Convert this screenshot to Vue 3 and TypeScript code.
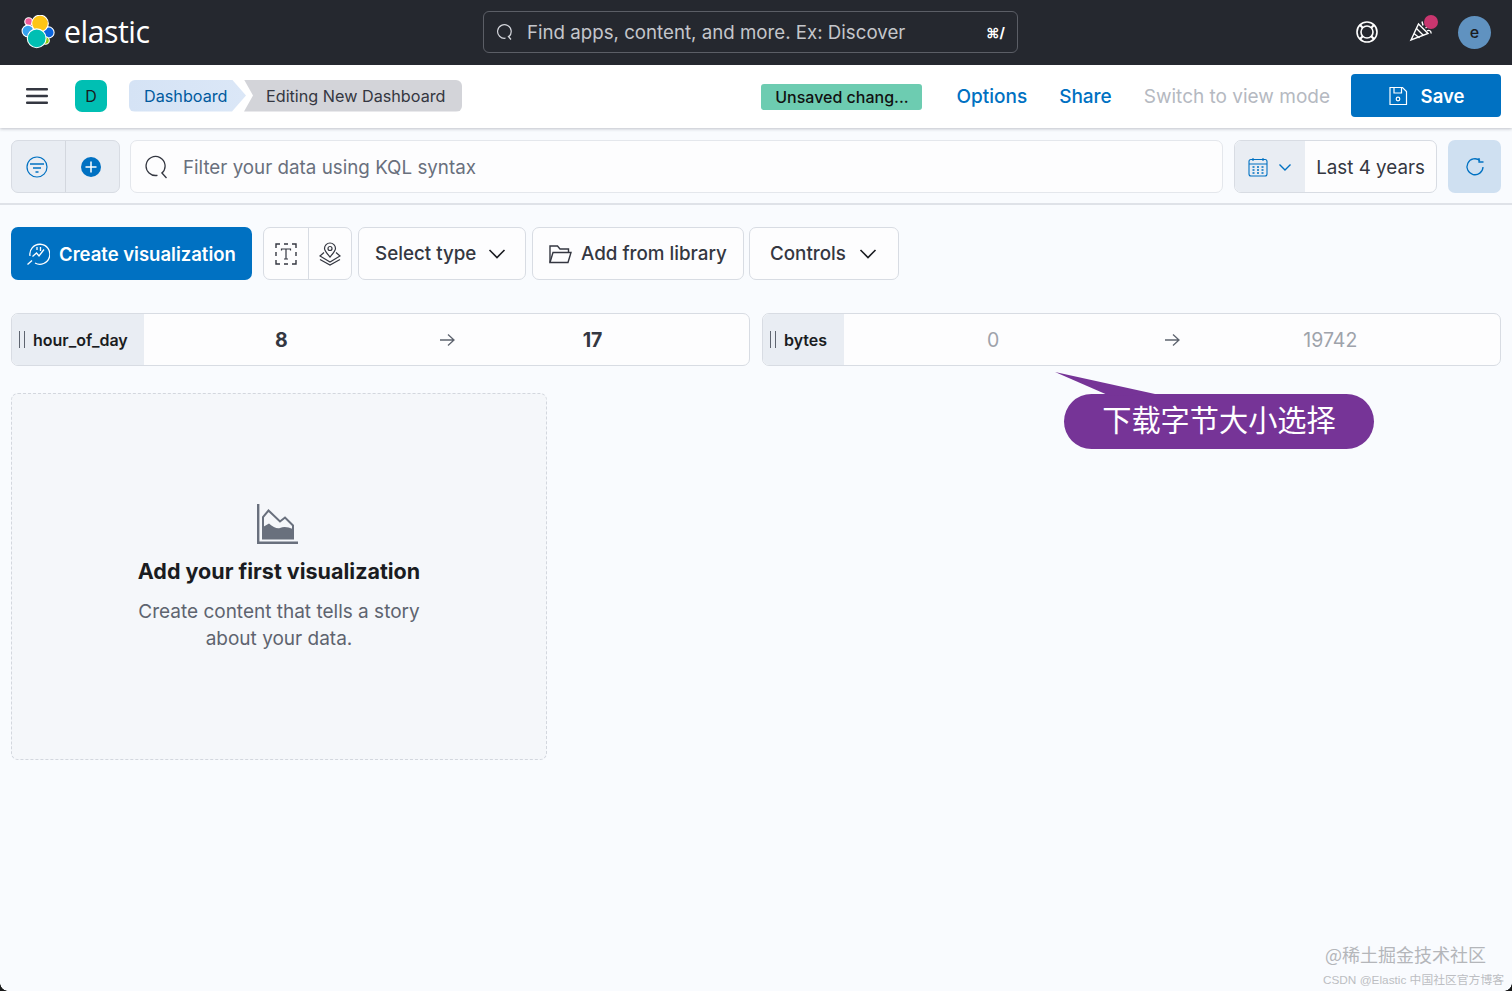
<script setup lang="ts">
</script>

<template>
  <div class="page">
    <header class="top">
      <div class="brand">
        <svg class="logo" viewBox="0 0 34 34" width="34" height="34">
          <g stroke="#fff" stroke-width="1.100">
            <circle cx="7.700" cy="6.700" r="3.900" fill="#ef5b9c" />
            <circle cx="27.500" cy="17.500" r="5.600" fill="#0b64dd" />
            <circle cx="24.500" cy="25.500" r="3.800" fill="#93c90e" />
            <circle cx="7" cy="16" r="5.900" fill="#36a2ef" />
            <circle cx="19" cy="8.500" r="8.300" fill="#fec514" />
            <circle cx="15.700" cy="23.300" r="9.400" fill="#00bfb3" />
          </g>
        </svg>
        <span class="wordmark">elastic</span>
      </div>
      <div class="global-search">
        <svg class="gs-icon" viewBox="0 0 18 18" width="18" height="18" fill="none" stroke="#d4d6dc" stroke-width="1.200">
          <path d="M14 13.500 A6.800 6.800 0 1 0 10.500 15.200" />
          <path d="M13 13 l3 3.500" />
        </svg>
        <span class="gs-text">Find apps, content, and more. Ex: Discover</span>
        <span class="gs-kbd">⌘/</span>
      </div>
      <div class="top-actions">
        <svg class="buoy" viewBox="0 0 24 24" width="24" height="24" fill="none" stroke="#fff" stroke-width="1.600">
          <circle cx="12" cy="12" r="10" />
          <circle cx="12" cy="12" r="6" />
          <path d="M5 5l3 3M19 5l-3 3M5 19l3-3M19 19l-3-3" stroke-width="2.200" />
        </svg>
        <div class="party">
          <svg viewBox="0 0 24 24" width="24" height="24" fill="none" stroke="#fff" stroke-width="1.400">
            <path d="M2 20 L9.500 4 L19 13.500 Z" />
            <path d="M5 13.500 L10.500 18M7.500 8.500 L14.500 15.500" />
            <path d="M13 1.500 L14 5.500M16.500 8 L19 6.500M18 11 C20 9.500 22.500 11 22 13.500" />
          </svg>
          <span class="dot"></span>
        </div>
        <div class="avatar">e</div>
      </div>
    </header>

    <nav class="subnav">
      <div class="nav-left">
        <svg class="menu" viewBox="0 0 22 16" width="22" height="16" fill="#343741">
          <rect y="0" width="22" height="2.500" rx="1" />
          <rect y="6.700" width="22" height="2.500" rx="1" />
          <rect y="13.400" width="22" height="2.500" rx="1" />
        </svg>
        <div class="space">D</div>
        <div class="crumbs">
          <span class="crumb first">Dashboard</span>
          <span class="crumb last">Editing New Dashboard</span>
        </div>
      </div>
      <div class="nav-right">
        <span class="unsaved">Unsaved chang...</span>
        <a class="link options">Options</a>
        <a class="link share">Share</a>
        <a class="link disabled">Switch to view mode</a>
        <button class="save">
          <svg viewBox="0 0 20 20" width="20" height="20" fill="none" stroke="#fff" stroke-width="1.200">
            <path d="M2 1.500 H14.500 L18.500 5.500 V18.500 H2 Z" />
            <path d="M6 1.500 V7 H13.500 V1.500" />
            <circle cx="10" cy="13" r="1.800" />
          </svg>
          <span>Save</span>
        </button>
      </div>
    </nav>

    <section class="querybar">
      <div class="filter-group">
        <div class="fg-cell">
          <svg viewBox="0 0 22 22" width="22" height="22" fill="none" stroke="#0071c2" stroke-width="1.200">
            <circle cx="11" cy="11" r="10" />
            <path d="M4 8h14M7 12h8M9.500 16h3" stroke-width="1.400" />
          </svg>
        </div>
        <div class="fg-cell end">
          <svg viewBox="0 0 22 22" width="22" height="22">
            <circle cx="11" cy="11" r="10" fill="#0071c2" />
            <path d="M11 5.500v11M5.500 11h11" stroke="#fff" stroke-width="1.500" />
          </svg>
        </div>
      </div>
      <div class="kql">
        <svg viewBox="0 0 24 24" width="24" height="24" fill="none" stroke="#343741" stroke-width="1.300">
          <path d="M17 18 A9.500 9.500 0 1 0 12.500 20.300" />
          <path d="M16.500 17.500 l5 5.500" />
        </svg>
        <span class="kql-text">Filter your data using KQL syntax</span>
      </div>
      <div class="time">
        <div class="cal">
          <svg viewBox="0 0 20 20" width="20" height="20" fill="none" stroke="#0071c2" stroke-width="1.100">
            <rect x="1" y="2.500" width="18" height="16.500" rx="2" />
            <path d="M1 7h18M5 1v3M15 1v3" />
            <path d="M4.500 10h2M9 10h2M13.500 10h2M4.500 13h2M9 13h2M13.500 13h2M4.500 16h2M9 16h2M13.500 16h2" stroke-width="1.300" />
          </svg>
          <svg viewBox="0 0 14 14" width="14" height="14" fill="none" stroke="#0071c2" stroke-width="1.400">
            <path d="M1.500 4.500 L7 10 L12.500 4.500" />
          </svg>
        </div>
        <span class="time-label">Last 4 years</span>
      </div>
      <button class="refresh">
        <svg viewBox="0 0 20 20" width="20" height="20" fill="none" stroke="#0071c2" stroke-width="1.300">
          <path d="M15 3.500 A8 8 0 1 0 18 10" />
          <path d="M14 1 V5 H18.500" />
        </svg>
      </button>
    </section>

    <section class="toolbar">
      <button class="create">
        <svg viewBox="0 0 24 24" width="24" height="24" fill="none" stroke="#fff" stroke-width="1.300">
          <path d="M1.500 22.500 L6 18.500" />
          <path d="M4 14 A10 10 0 1 1 9 21" />
          <path d="M6.500 14.500 L10.500 11 L13 14 L18 7.500M11 5v3M14.500 5v4" />
        </svg>
        <span>Create visualization</span>
      </button>
      <div class="icon-group">
        <div class="ig-cell">
          <svg viewBox="0 0 24 24" width="24" height="24" fill="none" stroke="#343741" stroke-width="1.400">
            <path d="M2 6V2h4M10 2h4M18 2h4v4M22 10v4M22 18v4h-4M14 22h-4M6 22H2v-4M2 14v-4" />
            <path d="M7.500 8.500V7h9v1.500M12 7v10M10 17h4" stroke-width="1.200" />
          </svg>
        </div>
        <div class="ig-cell end">
          <svg viewBox="0 0 24 24" width="24" height="24" fill="none" stroke="#343741" stroke-width="1.200">
            <path d="M12 15 C8 10.500 6.500 8.500 6.500 6.500 A5.500 5.500 0 0 1 17.500 6.500 C17.500 8.500 16 10.500 12 15 Z" />
            <circle cx="12" cy="6.500" r="2" />
            <path d="M6 10.500 L2 14 L12 20 L22 14 L18 10.500" />
            <path d="M2 17.500 L12 23 L22 17.500" />
          </svg>
        </div>
      </div>
      <button class="plain select-type">
        <span>Select type</span>
        <svg viewBox="0 0 18 18" width="18" height="18" fill="none" stroke="#1a1c21" stroke-width="1.600"><path d="M1.500 5 L9 12.500 L16.500 5" /></svg>
      </button>
      <button class="plain library">
        <svg viewBox="0 0 24 24" width="24" height="24" fill="none" stroke="#343741" stroke-width="1.400">
          <path d="M2 20.500 V4 H9.500 L12 7 H20.500 V10.500" />
          <path d="M2 20.500 L5 10.500 H23 L20 20.500 Z" />
        </svg>
        <span>Add from library</span>
      </button>
      <button class="plain controls">
        <span>Controls</span>
        <svg viewBox="0 0 18 18" width="18" height="18" fill="none" stroke="#1a1c21" stroke-width="1.600"><path d="M1.500 5 L9 12.500 L16.500 5" /></svg>
      </button>
    </section>

    <section class="controls-row">
      <div class="range hour">
        <div class="range-label"><i class="grip"></i><span>hour_of_day</span></div>
        <div class="range-values hour-values">
          <b class="v1">8</b>
          <svg class="arrow" viewBox="0 0 16 14" width="16" height="14" fill="none" stroke="#5e646f" stroke-width="1.300"><path d="M1 7h14M9 1.500 L15 7 L9 12.500" /></svg>
          <b class="v2">17</b>
        </div>
      </div>
      <div class="range bytes">
        <div class="range-label"><i class="grip"></i><span>bytes</span></div>
        <div class="range-values bytes-values">
          <span class="muted v3">0</span>
          <svg class="arrow" viewBox="0 0 16 14" width="16" height="14" fill="none" stroke="#5e646f" stroke-width="1.300"><path d="M1 7h14M9 1.500 L15 7 L9 12.500" /></svg>
          <span class="muted v4">19742</span>
        </div>
      </div>
    </section>

    <section class="canvas">
      <div class="empty">
        <svg viewBox="0 0 42 42" width="42" height="42">
          <path d="M1.200 0 V38.800 H41" fill="none" stroke="#69707d" stroke-width="2.400" />
          <path d="M6 34.500 V13 L11.500 6.500 L23 17.500 L28 13.500 L36 21.500 V34.500 Z" fill="none" stroke="#69707d" stroke-width="2" />
          <path d="M6 35 V23 L12 19.500 C16 23 20 25 23 24 C27 22 31 23 36 25 V35 Z" fill="#69707d" />
        </svg>
        <h2>Add your first visualization</h2>
        <p>Create content that tells a story<br />about your data.</p>
      </div>
    </section>

    <div class="callout">
      <svg class="tail" viewBox="0 0 110 30" width="110" height="30"><path d="M0 0 L100 22 L55 24 Z" fill="#763497" /></svg>
      <span>下载字节大小选择</span>
    </div>

    <div class="wm1">@稀土掘金技术社区</div>
    <div class="wm2">CSDN @Elastic 中国社区官方博客</div>
    <div class="corner"></div>
    <div class="corner-left"></div>
  </div>
</template>

<style>
html, body { margin: 0; background: #f9fbfe; }
</style>

<style scoped>
.page {
  position: relative;
  width: 1512px;
  height: 991px;
  overflow: hidden;
  background: #f9fbfe;
  font-family: Inter, "Liberation Sans", "Noto Sans CJK SC", sans-serif;
  color: #343741;
}
button { font-family: inherit; cursor: pointer; }
.top {
  height: 65px;
  background: #25282f;
  display: flex;
  align-items: center;
  box-sizing: border-box;
  padding: 0 0 1px 21px;
}
.brand { display: flex; align-items: center; width: 462px; }
.wordmark { color: #fff; font-family: "Open Sans", sans-serif; font-size: 30.300px; margin-left: 9px; letter-spacing: -0.500px; line-height: 34px; }
.global-search {
  width: 535px;
  height: 42px;
  box-sizing: border-box;
  border: 1px solid #5b5e66;
  border-radius: 6px;
  display: flex;
  align-items: center;
  padding: 0 12px 0 11px;
  color: #c4c6cb;
  font-size: 18.700px;
}
.gs-icon { margin-right: 14px; }
.gs-text { flex: 1; white-space: nowrap; }
.gs-kbd { color: #fff; font-size: 14px; font-weight: 700; }
.top-actions { margin-left: auto; display: flex; align-items: center; padding-right: 21px; }
.party { position: relative; width: 24px; height: 24px; margin-left: 30px; }
.dot { position: absolute; width: 14px; height: 14px; border-radius: 50%; background: #c9366f; top: -5px; left: 15px; }
.avatar {
  width: 33px; height: 33px; margin-left: 25px; border-radius: 50%; background: #6092c0; color: #1a1c21;
  display: flex; align-items: center; justify-content: center; font-size: 16px; font-weight: 500;
}
.subnav {
  height: 63px;
  background: #fff;
  display: flex;
  align-items: center;
  justify-content: space-between;
  box-shadow: 0 1px 3px rgba(60, 66, 80, 0.300);
  position: relative;
  box-sizing: border-box;
  padding: 0 11px 2px 26px;
}
.nav-left { display: flex; align-items: center; }
.space {
  width: 32px; height: 32px; margin-left: 27px; border-radius: 7px; background: #00bfb3;
  color: #1a1c21; font-size: 16px; display: flex; align-items: center; justify-content: center;
}
.crumbs { display: flex; margin-left: 22px; height: 32px; font-size: 16.200px; line-height: 32px; }
.crumb { display: block; white-space: nowrap; }
.first {
  width: 117px; padding-left: 15px; box-sizing: border-box; color: #005a9e;
  background: linear-gradient(90deg, #d5e3f5, #dbe7f7);
  border-radius: 6px 0 0 6px;
  clip-path: polygon(0 0, 103px 0, 117px 50%, 103px 100%, 0 100%);
}
.last {
  width: 218px; margin-left: -2px; padding-left: 22px; box-sizing: border-box; background: #d3d4d9; color: #343741;
  border-radius: 0 6px 6px 0;
  clip-path: polygon(0 0, 100% 0, 100% 100%, 0 100%, 9px 50%);
}
.nav-right { display: flex; align-items: center; }
.unsaved {
  width: 161px; height: 26px; box-sizing: border-box; background: #6dccb1; border-radius: 3px;
  font-size: 16px; font-weight: 500; line-height: 26px; color: #111; text-align: center; margin-top: 2px;
}
.link { font-size: 19px; color: #0071c2; font-weight: 500; white-space: nowrap; line-height: 24px; padding-top: 2px; }
.options { margin-left: 34px; }
.share { margin-left: 32px; }
.disabled { margin-left: 32px; color: #b5b9c1; font-weight: 400; }
.save {
  margin-left: 21px; width: 150px; height: 43px; border: 0; border-radius: 4px; background: #0071c2;
  color: #fff; font-size: 18.500px; font-weight: 600; display: flex; align-items: center; justify-content: center; gap: 13px;
}
.querybar {
  height: 77px;
  box-sizing: border-box;
  padding: 12px 11px 0;
  display: flex;
  align-items: flex-start;
  border-bottom: 2px solid #dfe2e8;
}
.filter-group {
  width: 109px; height: 53px; box-sizing: border-box; display: flex; background: #e9edf3;
  border: 1px solid #d8dce3; border-radius: 7px;
}
.fg-cell { width: 53px; display: flex; align-items: center; justify-content: center; padding-right: 3px; box-sizing: border-box; }
.fg-cell.end { flex: 1; border-left: 1px solid #d3d7de; }
.kql {
  width: 1094px; height: 53px; margin-left: 10px; box-sizing: border-box; background: #fdfdfe;
  border: 1px solid #e4e7ec; border-radius: 7px; display: flex; align-items: center; gap: 14px;
  padding-left: 14px; font-size: 18.800px; color: #69707d;
}
.kql-text { padding-top: 2px; }
.time {
  width: 203px; height: 53px; margin-left: 11px; box-sizing: border-box; display: flex; overflow: hidden;
  border: 1px solid #d8dce3; border-radius: 7px; background: #fdfdfe;
}
.cal { width: 70px; background: #e9edf3; display: flex; align-items: center; justify-content: center; gap: 10px; }
.time-label { padding-left: 11px; font-size: 18.800px; line-height: 53px; color: #343741; white-space: nowrap; }
.refresh {
  width: 53px; height: 53px; margin-left: 11px; border: 0; border-radius: 7px; background: #cfe0f1;
  display: flex; align-items: center; justify-content: center; padding: 0;
}
.toolbar { display: flex; align-items: flex-start; padding: 22px 11px 0; height: 108px; box-sizing: border-box; }
.create {
  width: 241px; height: 53px; border: 0; border-radius: 7px; background: #0071c2; color: #fff;
  font-size: 18.500px; font-weight: 600; display: flex; align-items: center; gap: 9px; padding: 0 0 0 15px;
  white-space: nowrap;
}
.icon-group {
  width: 89px; height: 53px; margin-left: 11px; box-sizing: border-box; display: flex; background: #fdfdfe;
  border: 1px solid #d8dce3; border-radius: 7px;
}
.ig-cell { width: 44px; display: flex; align-items: center; justify-content: center; }
.ig-cell.end { flex: 1; border-left: 1px solid #d8dce3; }
.plain {
  height: 53px; box-sizing: border-box; background: #fdfdfe; border: 1px solid #d8dce3; border-radius: 7px;
  color: #343741; font-size: 18.800px; font-weight: 500; display: flex; align-items: center; white-space: nowrap;
  margin-left: 6px; padding: 0;
}
.select-type { width: 168px; padding-left: 16px; gap: 12px; }
.library { width: 212px; padding-left: 15px; gap: 9px; }
.controls { width: 150px; margin-left: 5px; padding-left: 20px; gap: 13px; }
.controls-row { display: flex; gap: 12px; padding: 0 11px; }
.range {
  width: 739px; height: 53px; box-sizing: border-box; display: flex; overflow: hidden; background: #fdfdfe;
  border: 1px solid #d8dce3; border-radius: 7px;
}
.range-label {
  background: #e9edf3; display: flex; align-items: center; font-size: 16px; font-weight: 600; color: #1a1c21; height: 100%;
  padding-left: 7px; box-sizing: border-box;
}
.hour .range-label { width: 132px; }
.bytes .range-label { width: 81px; }
.grip { width: 6px; height: 17px; margin-right: 8px; border-left: 1.500px solid #5e646f; border-right: 1.500px solid #5e646f; box-sizing: border-box; }
.range-values { flex: 1; position: relative; display: flex; align-items: center; font-size: 19.500px; }
.range-values b { color: #343741; font-weight: 700; }
.muted { color: #9ea3ab; }
.hour-values .v1 { margin-left: 131px; }
.hour-values .arrow { margin-left: 151px; }
.hour-values .v2 { margin-left: 128px; }
.bytes-values .v3 { margin-left: 143px; }
.bytes-values .arrow { margin-left: 165px; }
.bytes-values .v4 { margin-left: 123px; }
.canvas { padding: 27px 11px 0; }
.empty {
  width: 536px; height: 367px; box-sizing: border-box; border: 1px dashed #d3d7de; border-radius: 7px; background: #f5f7fa;
  display: flex; flex-direction: column; align-items: center; padding-top: 110px;
}
.empty svg { margin-left: -2px; }
.empty h2 { margin: 9px 0 0; font-size: 21.500px; line-height: 32px; font-weight: 700; color: #1a1c21; }
.empty p { margin: 11px 0 0; font-size: 19px; line-height: 27px; color: #5e646f; text-align: center; }
.callout {
  position: absolute; left: 1064px; top: 394px; width: 310px; height: 55px; border-radius: 28px; background: #763497;
  color: #fff; font-size: 29.200px; line-height: 49px; text-align: center;
  font-family: "Noto Sans CJK SC", sans-serif;
}
.tail { position: absolute; left: -9px; top: -22px; }
.wm1 {
  position: absolute; right: 26px; top: 941px; font-size: 18px; line-height: 26px; color: #b4b6ba;
  font-family: "Noto Sans CJK SC", sans-serif;
}
.wm2 {
  position: absolute; right: 8px; top: 971px; font-size: 11.800px; line-height: 18px; color: #bcbec2;
  font-family: "Liberation Sans", "Noto Sans CJK SC", sans-serif;
}
.corner {
  position: absolute; right: 0; bottom: 0; width: 8px; height: 8px; background: radial-gradient(circle at 0 0, transparent 7.500px, #1a1a1a 8px);
}
.corner-left {
  position: absolute; left: 0; bottom: 0; width: 8px; height: 8px; background: radial-gradient(circle at 100% 0, transparent 7.500px, #1a1a1a 8px);
}
</style>
